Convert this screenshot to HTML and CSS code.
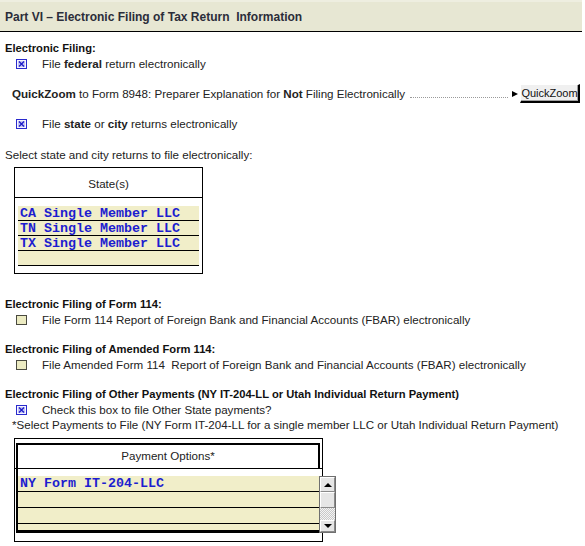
FILE: index.html
```html
<!DOCTYPE html>
<html>
<head>
<meta charset="utf-8">
<link rel="stylesheet" href="styles.css">
</head>
<body>
<div class="page">
  <div class="part-head">Part VI – Electronic Filing of Tax Return&nbsp; Information</div>

  <div class="heading h-first">Electronic Filing:</div>
  <div class="check-row">
    <span class="cb cb-on"><svg width="11" height="10" viewBox="0 0 11 10"><rect x="0.5" y="0.5" width="10" height="9" fill="#f4f4ff" stroke="#2a2acc"/><rect x="2" y="2" width="7" height="6" fill="#c8c8f4"/><path d="M3 2.5 L8 7.5 M8 2.5 L3 7.5" stroke="#1a1ac8" stroke-width="1.3"/></svg></span>
    <span class="label">File <b>federal</b> return electronically</span>
  </div>

  <div class="qz-row">
    <span class="qz-text"><b>QuickZoom</b> to Form 8948: Preparer Explanation for <b>Not</b> Filing Electronically</span>
    <span class="leader"></span>
    <span class="qz-arrow"></span>
    <button class="qz-btn">QuickZoom</button>
  </div>

  <div class="check-row r-state">
    <span class="cb cb-on"><svg width="11" height="10" viewBox="0 0 11 10"><rect x="0.5" y="0.5" width="10" height="9" fill="#f4f4ff" stroke="#2a2acc"/><rect x="2" y="2" width="7" height="6" fill="#c8c8f4"/><path d="M3 2.5 L8 7.5 M8 2.5 L3 7.5" stroke="#1a1ac8" stroke-width="1.3"/></svg></span>
    <span class="label">File <b>state</b> or <b>city</b> returns electronically</span>
  </div>

  <div class="plain p-select">Select state and city returns to file electronically:</div>

  <div class="state-table">
    <div class="st-head">State(s)</div>
    <div class="st-body">
      <div class="row">CA Single Member LLC</div>
      <div class="row">TN Single Member LLC</div>
      <div class="row">TX Single Member LLC</div>
      <div class="row"></div>
    </div>
  </div>

  <div class="heading h-114">Electronic Filing of Form 114:</div>
  <div class="check-row">
    <span class="cb cb-off"></span>
    <span class="label">File Form 114 Report of Foreign Bank and Financial Accounts (FBAR) electronically</span>
  </div>

  <div class="heading h-gap">Electronic Filing of Amended Form 114:</div>
  <div class="check-row">
    <span class="cb cb-off"></span>
    <span class="label">File Amended Form 114&nbsp; Report of Foreign Bank and Financial Accounts (FBAR) electronically</span>
  </div>

  <div class="heading h-gap">Electronic Filing of Other Payments (NY IT-204-LL or Utah Individual Return Payment)</div>
  <div class="check-row">
    <span class="cb cb-on"><svg width="11" height="10" viewBox="0 0 11 10"><rect x="0.5" y="0.5" width="10" height="9" fill="#f4f4ff" stroke="#2a2acc"/><rect x="2" y="2" width="7" height="6" fill="#c8c8f4"/><path d="M3 2.5 L8 7.5 M8 2.5 L3 7.5" stroke="#1a1ac8" stroke-width="1.3"/></svg></span>
    <span class="label">Check this box to file Other State payments?</span>
  </div>
  <div class="plain p-pay">*Select Payments to File (NY Form IT-204-LL for a single member LLC or Utah Individual Return Payment)</div>

  <div class="pay-box">
    <div class="pay-head">Payment Options*</div>
    <div class="pay-sep"></div>
    <div class="pay-body">
      <div class="pay-rows">
        <div class="row prow">NY Form IT-204-LLC</div>
        <div class="row prow"></div>
        <div class="row prow"></div>
        <div class="row prow"></div>
      </div>
      <div class="scrollbar">
        <div class="sb-btn sb-up"><span class="tri-up"></span></div>
        <div class="sb-thumb"></div>
        <div class="sb-track"></div>
        <div class="sb-btn sb-down"><span class="tri-down"></span></div>
      </div>
    </div>
  </div>
</div>
</body>
</html>
```

FILE: styles.css
```css
html, body {
  margin: 0;
  padding: 0;
  background: #ffffff;
}

body {
  font-family: "Liberation Sans", Arial, sans-serif;
  font-size: 11.6px;
  color: #222222;
}

.page {
  width: 582px;
}

.part-head {
  height: 31px;
  line-height: 34px;
  padding-left: 5px;
  background: linear-gradient(#eeeee0 0, #eeeee0 2px, #e7e7d3 2px);
  border-bottom: 1px solid #000000;
  font-size: 12px;
  font-weight: bold;
  color: #2b2d3a;
}

.heading {
  height: 15px;
  line-height: 15px;
  padding-left: 5px;
  font-size: 11.2px;
  font-weight: bold;
  color: #111111;
  white-space: nowrap;
}

.h-first { margin-top: 9px; }
.h-114 { margin-top: 23px; }
.h-gap { margin-top: 15px; }

.check-row {
  display: flex;
  align-items: center;
  height: 15px;
  padding-left: 16px;
}

.r-state { margin-top: 13px; }

.cb {
  display: block;
  width: 11px;
  height: 10px;
  flex: none;
}

.cb svg { display: block; }

.cb-off {
  box-sizing: border-box;
  border: 1px solid #4a4a40;
  background: #ecebc2;
}

.label {
  margin-left: 15px;
  line-height: 15px;
  white-space: nowrap;
}

.qz-row {
  display: flex;
  align-items: center;
  height: 19px;
  margin-top: 13px;
  padding-left: 12px;
  padding-right: 2px;
}

.qz-text {
  white-space: nowrap;
}

.leader {
  flex: 1;
  align-self: flex-end;
  margin: 0 4px 5px 5px;
  border-bottom: 1px dotted #9a9a9a;
}

.qz-arrow {
  width: 0;
  height: 0;
  border-top: 3px solid transparent;
  border-bottom: 3px solid transparent;
  border-left: 6px solid #000000;
  margin-right: 2px;
}

.qz-btn {
  box-sizing: border-box;
  width: 60px;
  height: 19px;
  padding: 0;
  font-family: "Liberation Sans", Arial, sans-serif;
  font-size: 11px;
  color: #111111;
  background: #f0f0f0;
  border-top: 1px solid #ffffff;
  border-left: 1px solid #ffffff;
  border-right: 2px solid #000000;
  border-bottom: 2px solid #000000;
  box-shadow: inset -1px -1px 0 #a0a0a0;
}

.plain {
  height: 15px;
  line-height: 15px;
  white-space: nowrap;
}

.p-select {
  margin-top: 16px;
  padding-left: 5px;
}

.p-pay {
  padding-left: 12px;
}

.state-table {
  margin-top: 5px;
  margin-left: 14px;
  width: 189px;
  box-sizing: border-box;
  border: 1px solid #000000;
}

.st-head {
  height: 29px;
  line-height: 32px;
  text-align: center;
  border-bottom: 1px solid #000000;
}

.st-body {
  padding: 8px 3px 7px 3px;
}

.row {
  height: 14px;
  line-height: 15px;
  border-bottom: 1px solid #000000;
  background: #f1eec9;
  padding-left: 2px;
  font-family: "Liberation Mono", "Courier New", monospace;
  font-weight: bold;
  font-size: 13.33px;
  color: #1d1dcf;
  white-space: nowrap;
  overflow: hidden;
}

.pay-box {
  margin-top: 6px;
  margin-left: 14px;
  width: 309px;
  box-sizing: border-box;
  border: 1px solid #000000;
  padding: 4px 2px 8px 1px;
}

.pay-head {
  height: 23px;
  line-height: 22px;
  text-align: center;
  border: 2px solid #000000;
  border-bottom: none;
}

.pay-sep {
  height: 1px;
  background: #000000;
  margin: 0 -2px 0 -1px;
}

.pay-body {
  display: flex;
  padding-top: 7px;
  border-left: 2px solid #000000;
  border-bottom: 3px solid #000000;
}

.pay-rows {
  flex: 1;
  height: 54px;
  overflow: hidden;
}

.prow {
  height: 15px;
  line-height: 16px;
}

.scrollbar {
  flex: none;
  width: 17px;
  height: 57px;
  margin-right: -16px;
  margin-bottom: -3px;
  box-sizing: border-box;
  border: 1px solid #6f6f6f;
  display: flex;
  flex-direction: column;
  background: #ffffff;
}

.sb-btn,
.sb-thumb {
  box-sizing: border-box;
  background: #e6e6e6;
  border-top: 1px solid #ffffff;
  border-left: 1px solid #ffffff;
  border-right: 1px solid #8a8a8a;
  border-bottom: 1px solid #8a8a8a;
  display: flex;
  align-items: center;
  justify-content: center;
}

.sb-up { height: 15px; }
.sb-thumb { height: 16px; }
.sb-down { height: 12px; }

.sb-track {
  flex: 1;
  background: repeating-conic-gradient(#c8c8c8 0 25%, #f4f4f4 0 50%) 0 0 / 2px 2px;
}

.tri-up {
  width: 0;
  height: 0;
  border-left: 4px solid transparent;
  border-right: 4px solid transparent;
  border-bottom: 4px solid #000000;
}

.tri-down {
  width: 0;
  height: 0;
  border-left: 4px solid transparent;
  border-right: 4px solid transparent;
  border-top: 4px solid #000000;
}
```
